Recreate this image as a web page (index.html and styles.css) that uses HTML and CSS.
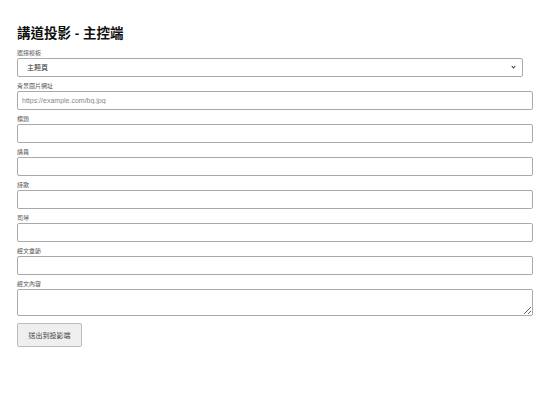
FILE: index.html
```html
<!DOCTYPE html>
<html>
	<head>
		<meta charset="utf-8">
		<link rel="stylesheet" href="styles.css">
	</head>
	<body>
		<h1 class="title">講道投影 - 主控端</h1>
		<form class="panel" id="control">
			<label class="lbl">選擇模板</label>
			<div class="pick">
				<select class="field sel" id="template">
					<option>主題頁</option>
				</select>
			</div>
			<label class="lbl">背景圖片網址</label>
			<input class="field" id="bg" type="text" placeholder="https://example.com/bg.jpg">
			<label class="lbl">標題</label>
			<input class="field" id="topic" type="text">
			<label class="lbl">講員</label>
			<input class="field" id="speaker" type="text">
			<label class="lbl">詩歌</label>
			<input class="field" id="hymn" type="text">
			<label class="lbl">司琴</label>
			<input class="field" id="pianist" type="text">
			<label class="lbl">經文章節</label>
			<input class="field" id="verse" type="text">
			<label class="lbl">經文內容</label>
			<textarea class="field area" id="text"></textarea>
			<div class="actions">
				<input type="button" class="send" id="SEND" value="送出到投影端">
			</div>
		</form>
	</body>
</html>
```

FILE: styles.css
```css
body{
	margin: 0;
	padding: 0 17px;
	font-family: "Liberation Sans", "Noto Sans CJK TC", sans-serif;
	color: #222;
	background-color: #fff;
}
.title{
	font-size: 13.5px;
	font-weight: 600;
	margin: 25px 0 7px 0;
	line-height: 18px;
	color: #111;
}
.panel{
	display: flex;
	flex-direction: column;
}
.lbl{
	font-size: 6px;
	line-height: 7px;
	color: #555;
	margin-bottom: 1px;
}
.field{
	width: 100%;
	padding: 2px 4px;
	font-size: 7px;
	font-family: "Liberation Sans", "Noto Sans CJK TC", sans-serif;
	border: 1px solid #aaa;
	border-radius: 2px;
	margin: 0 0 6px 0;
	background-color: #fff;
	color: #333;
}
/* select with a small chevron drawn by css */
.pick{
	position: relative;
}
.pick::after{
	content: "";
	position: absolute;
	right: 8px;
	top: 7px;
	width: 2px;
	height: 2px;
	border-right: 1px solid #333;
	border-bottom: 1px solid #333;
	transform: rotate(45deg);
	pointer-events: none;
}
.sel{
	box-sizing: border-box;
	height: 19px;
	padding: 0 9px;
	appearance: none;
	-webkit-appearance: none;
	display: block;
}
input.field{
	box-sizing: content-box;
	height: 13px;
}
input.field::placeholder{
	color: #888;
}
.area{
	height: 21px;
	resize: vertical;
	margin-bottom: 7px;
}
.send{
	width: 65px;
	height: 24px;
	font-size: 7px;
	font-family: "Liberation Sans", "Noto Sans CJK TC", sans-serif;
	background-color: #efefef;
	border: 1px solid #bbb;
	border-radius: 2px;
	color: #444;
}
```
